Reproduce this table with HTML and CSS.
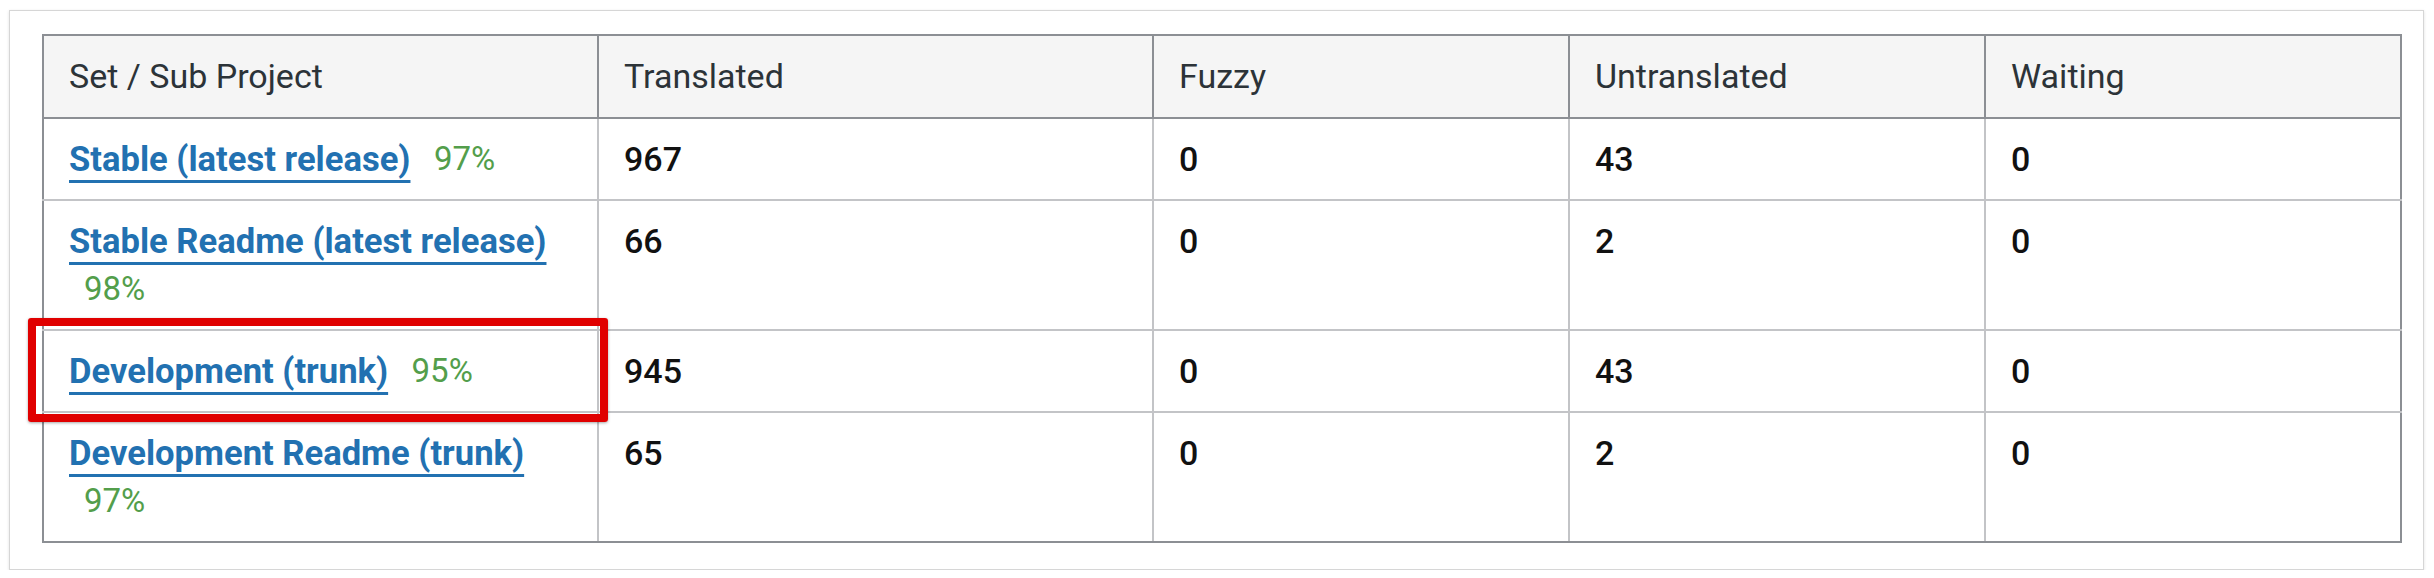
FILE: index.html
```html
<!DOCTYPE html>
<html>
<head>
<meta charset="utf-8">
<link rel="stylesheet" href="styles.css">
</head>
<body>
<div class="card">
  <table class="stats">
    <colgroup>
      <col class="c-wide"><col class="c-wide"><col class="c-narrow"><col class="c-narrow"><col class="c-narrow">
    </colgroup>
    <thead>
      <tr>
        <th>Set / Sub Project</th>
        <th>Translated</th>
        <th>Fuzzy</th>
        <th>Untranslated</th>
        <th>Waiting</th>
      </tr>
    </thead>
    <tbody>
      <tr>
        <td class="name"><a href="#">Stable (latest release)</a> <span class="pct">97%</span></td>
        <td>967</td><td>0</td><td>43</td><td>0</td>
      </tr>
      <tr>
        <td class="name"><a href="#">Stable Readme (latest release)</a> <span class="pct">98%</span></td>
        <td>66</td><td>0</td><td>2</td><td>0</td>
      </tr>
      <tr>
        <td class="name"><a href="#">Development (trunk)</a> <span class="pct">95%</span></td>
        <td>945</td><td>0</td><td>43</td><td>0</td>
      </tr>
      <tr>
        <td class="name"><a href="#">Development Readme (trunk)</a> <span class="pct">97%</span></td>
        <td>65</td><td>0</td><td>2</td><td>0</td>
      </tr>
    </tbody>
  </table>
  <div class="highlight"></div>
</div>
</body>
</html>
```
FILE: styles.css
```css
html, body {
  margin: 0;
  padding: 0;
  background: #ffffff;
}
body {
  font-family: Roboto, "Liberation Sans", sans-serif;
}
.card {
  position: relative;
  margin: 10px 0 0 9px;
  width: 2415px;
  box-sizing: border-box;
  background: #fff;
  border: 1px solid #d6d6d6;
  box-shadow: 0 1px 3px rgba(0, 0, 0, 0.12);
  padding: 23px 22px 26px 32px;
}
.stats {
  width: 2360px;
  table-layout: fixed;
  border-collapse: collapse;
  border: 2px solid #8c8f94;
}
.c-wide { width: 555px; }
.c-narrow { width: 416px; }
.stats th {
  background: #f5f5f5;
  color: #2c3338;
  font-weight: 400;
  font-size: 34px;
  text-align: left;
  padding: 0 25px;
  height: 81px;
  line-height: 47px;
  border: 2px solid #8c8f94;
}
.stats td {
  vertical-align: top;
  font-size: 34px;
  font-weight: 500;
  color: #111;
  line-height: 48px;
  padding: 16px 25px 16px;
  border: 2px solid #c3c4c7;
  border-top: none;
}
.stats td:first-child { border-left: 2px solid #8c8f94; }
.stats td:last-child { border-right: 2px solid #8c8f94; }
.stats tbody tr:last-child td { border-bottom: 2px solid #8c8f94; }
.stats td.name a {
  color: #2271b1;
  font-size: 34.6px;
  font-weight: 700;
  vertical-align: top;
  text-decoration: underline;
  text-decoration-thickness: 3px;
  text-underline-offset: 9px;
}
.pct {
  color: #539e4b;
  font-size: 33px;
  font-weight: 400;
  vertical-align: top;
  margin-left: 15px;
}
.highlight {
  position: absolute;
  left: 18px;
  top: 307px;
  width: 580px;
  height: 104px;
  box-sizing: border-box;
  border: 8px solid #e00000;
  border-radius: 3px;
  box-shadow: 0 1px 3px rgba(0, 0, 0, 0.35);
}
```
